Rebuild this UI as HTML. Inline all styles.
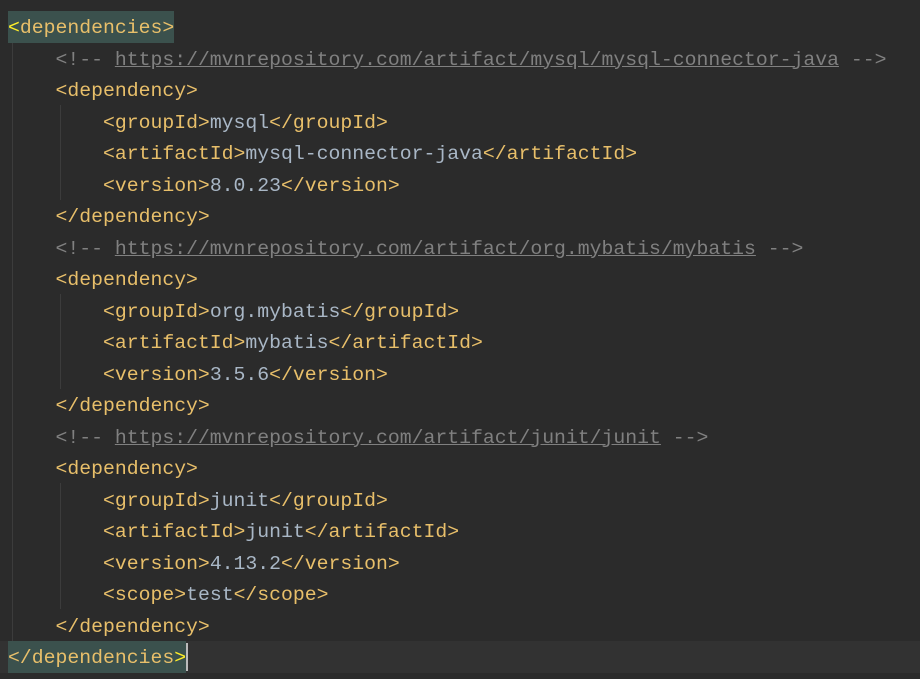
<!DOCTYPE html>
<html><head><style>
body{margin:0;width:920px;height:679px;background:#2b2b2b;overflow:hidden;position:relative;font-family:"Liberation Mono",monospace;font-size:19.8px}
.l{position:absolute;left:8px;height:31.5px;line-height:31.5px;white-space:pre;color:#a9b7c6}
.l>span{position:relative;top:2px}
.t{color:#e8bf6a}.c{color:#808080}.u{text-decoration:underline}
.h{background:#3b514d;display:inline-block;height:31.5px;top:0!important;line-height:35.5px}
.y{color:#ffef28}
.g{position:absolute;width:1px;background:#3c3c3c}
.cur{position:absolute;left:0;top:641px;width:920px;height:31.5px;background:#323232}
</style></head><body>
<div class="cur"></div>
<div class="g" style="left:12px;top:42px;height:599px"></div>
<div class="g" style="left:60px;top:105px;height:95px"></div>
<div class="g" style="left:60px;top:294px;height:95px"></div>
<div class="g" style="left:60px;top:483px;height:126px"></div>
<div class="l" style="top:11px"><span class="t h"><span class="y">&lt;</span>dependencies&gt;</span></div>
<div class="l" style="top:42.5px">    <span class="c">&lt;!-- <span class="u">https://mvnrepository.com/artifact/mysql/mysql-connector-java</span> --&gt;</span></div>
<div class="l" style="top:74px">    <span class="t">&lt;dependency&gt;</span></div>
<div class="l" style="top:105.5px">        <span class="t">&lt;groupId&gt;</span><span>mysql</span><span class="t">&lt;/groupId&gt;</span></div>
<div class="l" style="top:137px">        <span class="t">&lt;artifactId&gt;</span><span>mysql-connector-java</span><span class="t">&lt;/artifactId&gt;</span></div>
<div class="l" style="top:168.5px">        <span class="t">&lt;version&gt;</span><span>8.0.23</span><span class="t">&lt;/version&gt;</span></div>
<div class="l" style="top:200px">    <span class="t">&lt;/dependency&gt;</span></div>
<div class="l" style="top:231.5px">    <span class="c">&lt;!-- <span class="u">https://mvnrepository.com/artifact/org.mybatis/mybatis</span> --&gt;</span></div>
<div class="l" style="top:263px">    <span class="t">&lt;dependency&gt;</span></div>
<div class="l" style="top:294.5px">        <span class="t">&lt;groupId&gt;</span><span>org.mybatis</span><span class="t">&lt;/groupId&gt;</span></div>
<div class="l" style="top:326px">        <span class="t">&lt;artifactId&gt;</span><span>mybatis</span><span class="t">&lt;/artifactId&gt;</span></div>
<div class="l" style="top:357.5px">        <span class="t">&lt;version&gt;</span><span>3.5.6</span><span class="t">&lt;/version&gt;</span></div>
<div class="l" style="top:389px">    <span class="t">&lt;/dependency&gt;</span></div>
<div class="l" style="top:420.5px">    <span class="c">&lt;!-- <span class="u">https://mvnrepository.com/artifact/junit/junit</span> --&gt;</span></div>
<div class="l" style="top:452px">    <span class="t">&lt;dependency&gt;</span></div>
<div class="l" style="top:483.5px">        <span class="t">&lt;groupId&gt;</span><span>junit</span><span class="t">&lt;/groupId&gt;</span></div>
<div class="l" style="top:515px">        <span class="t">&lt;artifactId&gt;</span><span>junit</span><span class="t">&lt;/artifactId&gt;</span></div>
<div class="l" style="top:546.5px">        <span class="t">&lt;version&gt;</span><span>4.13.2</span><span class="t">&lt;/version&gt;</span></div>
<div class="l" style="top:578px">        <span class="t">&lt;scope&gt;</span><span>test</span><span class="t">&lt;/scope&gt;</span></div>
<div class="l" style="top:609.5px">    <span class="t">&lt;/dependency&gt;</span></div>
<div class="l" style="top:641px"><span class="t h">&lt;/dependencies<span class="y">&gt;</span></span><span style="display:inline-block;width:2px;height:28px;background:#bbb;vertical-align:top;top:2px"></span></div>
</body></html>
